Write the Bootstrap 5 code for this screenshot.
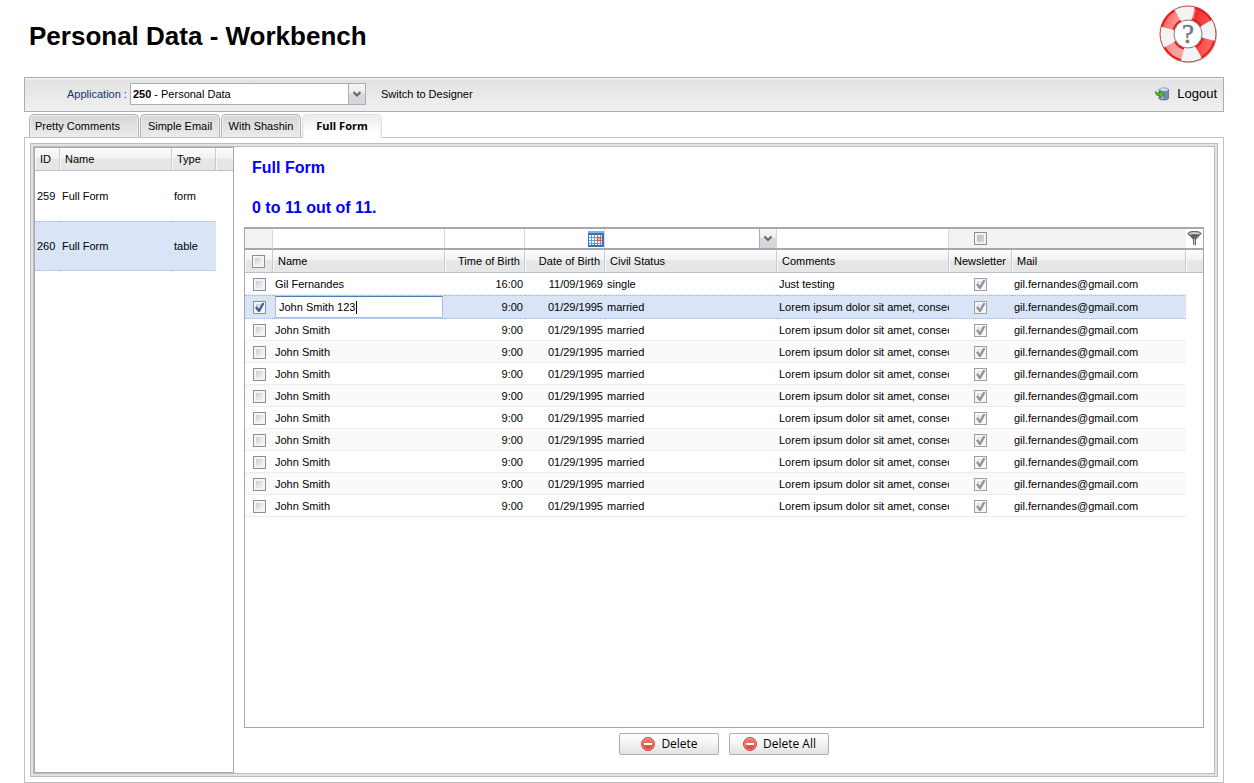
<!DOCTYPE html>
<html lang="en">
<head>
<meta charset="utf-8">
<meta name="viewport" content="width=device-width, initial-scale=1">
<title>Personal Data - Workbench</title>
<link href="https://cdn.jsdelivr.net/npm/bootstrap@5.3.0/dist/css/bootstrap.min.css" rel="stylesheet">
<style>
  body { font: 11px/14px "Liberation Sans", Arial, sans-serif; color: #000; background: #fff; padding: 0 30px 0 24px; }
  a, a:hover { color: #000; text-decoration: none; }
  .page-head { height: 77px; padding: 4px 6px 0 5px; }
  .page-head h1 { font-size: 26px; line-height: 32px; font-weight: 700; padding-top: 16px; margin: 0; }

  .toolbar { height: 35px; border: 1px solid #a9adb8; background: linear-gradient(#f2f2f2 0 1px, #e2e2e2 2px, #f0f0f0); padding: 0 6px 2px 42px; }
  .toolbar label { color: #15356b; }
  .app-picker { width: 236px; height: 22px; border: 1px solid #a9adb8; background: #fff; margin: 0 15px 0 3px; padding-left: 2px; }
  .drop { appearance: none; border: 0; border-radius: 0; background: #fff url("data:image/svg+xml,%3Csvg xmlns='http://www.w3.org/2000/svg' width='17' height='20'%3E%3ClinearGradient id='g' x2='0' y2='1'%3E%3Cstop stop-color='%23f6f6f6'/%3E%3Cstop offset='.45' stop-color='%23ececec'/%3E%3Cstop offset='.5' stop-color='%23d8d8d8'/%3E%3Cstop offset='1' stop-color='%23d4d4d4'/%3E%3C/linearGradient%3E%3Cpath fill='url(%23g)' d='M0 0h17v20H0z'/%3E%3Cpath stroke='%23a9adb8' d='M.5 0v20'/%3E%3Cpath fill='none' stroke='%23666' stroke-width='2' d='m5.500 8 3.500 3.500 3.500-3.500'/%3E%3C/svg%3E") no-repeat right center; padding: 0 20px 0 3px; font: inherit; color: #000; outline: 0; }
  .logout { font-size: 13px; }

  .nav-tabs { border: 0; margin: 2px 0 -1px 5px; gap: 1px; position: relative; }
  .nav-tabs .nav-link { width: 80px; height: 23px; margin: 0; padding: 0 0 1px; border: 1px solid #b0b0b0; border-bottom: 0; border-radius: 5px 5px 0 0; background: linear-gradient(#d6d6d6, #ececec); box-shadow: inset 1px 1px #f0f0f0, inset -1px 0 #f0f0f0; color: #000; font: inherit; }
  .nav-tabs .nav-link.first-tab { width: 110px; padding-left: 5px; text-align: left; }
  .nav-tabs .nav-link.active { height: 24px; background: linear-gradient(#ebebeb, #fff 80%); font: 700 11px/14px "Open Sans", sans-serif; color: #000; }

  .tab-panel { border: 1px solid #c2c2c6; padding: 5px; }
  .frame { border: 1px solid #bdbdbd; background: #e2e3e1; padding: 2px; }
  .frame-body { border: 1px solid #bdbdbd; background: #fff; }
  .sidebar { width: 200px; border: 1px solid #a5a8b3; flex: none; }
  .workspace { padding: 11px 10px 18px; min-width: 0; }
  .workspace h2 { font-size: 16px; line-height: 20px; font-weight: 700; color: #00f; margin: 0 8px 20px; }
  .workspace h2 + h2 { margin-bottom: 9px; }
  .grid-box { border: 1px solid #a5a8b3; }

  .data-grid { width: 100%; table-layout: fixed; border-collapse: separate; border-spacing: 0; }
  .data-grid th, .data-grid td { padding: 0 0 0 2px; white-space: nowrap; overflow: hidden; vertical-align: middle; }
  .data-grid .heads th { height: 23px; padding: 0 4px 0 5px; font-weight: 400; background: linear-gradient(#fcfcfc, #f2f2f2 45%, #e6e6e6 50%, #e6e6e6); border-right: 1px solid #c5cbd5; border-bottom: 1px solid #b8bfcd; box-shadow: inset 1px 0 #fafafa; }
  .data-grid .heads th:last-child { border-right: 0; }
  .data-grid tbody td { height: 22px; border-bottom: 1px solid #ededed; }
  .data-grid tbody tr:nth-child(even) td { background: #fafafa; }
  .data-grid tbody td:last-child, .data-grid tbody tr:nth-child(even) td:last-child { border: 0; background: none; }
  .data-grid .text-end { padding-right: 2px; }
  .data-grid tbody tr.picked td:not(:last-child) { height: 24px; background: #d9e4f6; border-top: 1px dotted #9db6e4; border-bottom: 1px dotted #9db6e4; }
  .data-grid .center-cell { text-align: center; }
  .data-grid.tall tbody td, .data-grid.tall tbody tr.picked td:not(:last-child) { height: 50px; }
  .data-grid.tall tbody tr:first-child td { border: 0; }

  .filters td { height: 22px; background: #f3f3f3; border-top: 1px solid #a5a8b3; border-bottom: 2px solid #a5a8b3; }
  .data-grid .filters td { padding: 0; }
  .data-grid .filters td:first-child { border-right: 1px solid #d8dae0; }
  .data-grid .filters td:last-child { background: #fff; }
  .filters .fill { display: block; width: 100%; height: 19px; border: 1px solid #d8dae0; border-width: 0 1px 0 0; border-radius: 0; background-color: #fff; outline: 0; }
  .filters .date-cell { height: 19px; background: #fff; border-right: 1px solid #d8dae0; }
  .filters .date-cell .fill { border-right: 0; min-width: 0; }
  .plain { border: 0; background: none; padding: 0; display: block; line-height: 0; }

  .tick { appearance: none; display: block; margin: 0 auto; width: 13px; height: 13px; border: 1px solid #8e8f8f; background: linear-gradient(135deg, #cbcfd5, #f6f6f6) content-box, #f4f4f4; padding: 2px; box-shadow: inset 0 0 0 1px #f4f4f4; }
  .data-grid tbody .tick { margin-top: 1px; }
  .data-grid tbody td:has(.tick) { padding: 0; }
  .tick:checked { background: url("data:image/svg+xml,%3Csvg xmlns='http://www.w3.org/2000/svg' viewBox='0 0 11 11'%3E%3Cpath fill='none' stroke='%23405a96' stroke-width='2' d='m2.500 5 2.500 3.500L9 1.500'/%3E%3C/svg%3E") border-box, linear-gradient(135deg, #cbcfd5, #f6f6f6) content-box, #f4f4f4; }
  .tick:disabled { border-color: #a0a0a0; background: linear-gradient(135deg, #e0e2e5, #f6f6f6) content-box, #f8f8f8; }
  .tick:disabled:checked { background: url("data:image/svg+xml,%3Csvg xmlns='http://www.w3.org/2000/svg' viewBox='0 0 11 11'%3E%3Cpath fill='none' stroke='%238e939c' stroke-width='2' d='m2.500 5 2.500 3.500L9 1.500'/%3E%3C/svg%3E") border-box, linear-gradient(135deg, #e0e2e5, #f6f6f6) content-box, #f8f8f8; }
  .tick.mixed { background: linear-gradient(135deg, #bfbfbf, #d6d6d6) content-box, #f4f4f4; }
  .cell-edit { display: block; width: 168px; height: 22px; border: 1px solid #a9c0e2; border-top-color: #4f7bb5; border-radius: 0; padding: 0 3px; font: inherit; color: #000; outline: 0; background: linear-gradient(#000, #000) 80px 4px / 1px 13px no-repeat #fff; }

  .actions { gap: 10px; margin-top: 5px; }
  .actions .btn { width: 100px; height: 22px; padding: 0 0 0 1px; gap: 6px; border: 1px solid #a9adb8; border-radius: 2px; background: linear-gradient(#fff, #f3f3f3 50%, #e2e2e2); font: 12px/16px "Open Sans", sans-serif; color: #000; }
</style>
<script src="https://cdn.jsdelivr.net/npm/bootstrap@5.3.0/dist/js/bootstrap.bundle.min.js" defer></script>
</head>
<body class="min-vh-100 d-flex flex-column">
<svg width="0" height="0" class="position-absolute" aria-hidden="true">
  <defs>
    <linearGradient id="redDisc" x2="0" y2="1"><stop stop-color="#f28478"/><stop offset="1" stop-color="#d83a30"/></linearGradient>
    <symbol id="minus" viewBox="0 0 14 14"><circle cx="7" cy="7" r="6.500" fill="url(#redDisc)" stroke="#c9453c"/><circle cx="7" cy="7" r="5.500" fill="none" stroke="#f4a69e" stroke-width=".7"/><path fill="#fff" d="M3 6h8v2H3z"/></symbol>
  </defs>
</svg>

<header class="page-head d-flex justify-content-between align-items-start">
  <h1>Personal Data - Workbench</h1>
  <a href="#" aria-label="Help">
    <svg width="60" height="60" viewBox="0 0 60 60" class="d-block">
      <defs>
        <linearGradient id="ring" gradientUnits="userSpaceOnUse" x1="0" y1="4" x2="0" y2="56"><stop stop-color="#f66"/><stop offset=".3" stop-color="#fba09e"/><stop offset=".5" stop-color="#fba4a2"/><stop offset=".55" stop-color="#f02c2c"/><stop offset="1" stop-color="#fb6b68"/></linearGradient>
      </defs>
      <circle cx="31" cy="31" r="28" fill="#999" opacity=".6"/>
      <circle cx="30" cy="30" r="28" fill="#f3f3f3"/>
      <g fill="none">
        <circle cx="30" cy="30" r="21" stroke="url(#ring)" stroke-width="14" stroke-dasharray="16.493 16.493" transform="rotate(-76 30 30)"/>
        <circle cx="30" cy="30" r="27" stroke="#f01818" stroke-width="2" stroke-dasharray="21.206 21.206" transform="rotate(-76 30 30)"/>
        <circle cx="30" cy="30" r="28" stroke="#c24444" stroke-width="1"/>
        <circle cx="30" cy="30" r="15" stroke="#e01818" stroke-width="2" stroke-dasharray="11.781 11.781" transform="rotate(-76 30 30)"/>
      </g>
      <circle cx="30" cy="30" r="14" fill="#fff" stroke="#8d7777" stroke-width="1"/>
      <text x="30" y="39" text-anchor="middle" font-family="Liberation Serif, serif" font-size="27" fill="#777" stroke="#777" stroke-width=".5">?</text>
    </svg>
  </a>
</header>

<nav class="toolbar d-flex align-items-center">
  <label for="app">Application :</label>
  <div class="app-picker d-flex align-items-center">
    <b>250</b>
    <select id="app" class="drop flex-grow-1 h-100"><option>- Personal Data</option></select>
  </div>
  <a href="#">Switch to Designer</a>
  <a href="#" class="logout ms-auto d-flex align-items-center gap-2">
    <svg width="14" height="14" viewBox="0 0 14 14"><path fill="#7c86ba" stroke="#565f95" stroke-width=".7" d="M4 2.500C4.500.5 13 .5 13.500 2.500v9c-.5 2-9 2-9.500 0z"/><ellipse cx="8.700" cy="2.600" rx="4.500" ry="1.500" fill="#d3d8ee"/><path fill="#b6bde0" d="M6 5h2v7H6z"/><path fill="#55c12c" stroke="#237a12" stroke-width=".7" d="M.5 4.500 2.500 6H5V3.500L9.500 7.500 5 11V8.500H2.500C1 8 .5 6.500.5 4.500z"/></svg>
    Logout
  </a>
</nav>

<ul class="nav nav-tabs">
  <li class="nav-item"><button type="button" class="nav-link first-tab">Pretty Comments</button></li>
  <li class="nav-item"><button type="button" class="nav-link">Simple Email</button></li>
  <li class="nav-item"><button type="button" class="nav-link">With Shashin</button></li>
  <li class="nav-item"><button type="button" class="nav-link active">Full Form</button></li>
</ul>

<main class="tab-panel flex-grow-1 d-flex">
  <div class="frame flex-grow-1 d-flex">
    <div class="frame-body flex-grow-1 d-flex">
      <aside class="sidebar">
        <table class="data-grid tall">
          <colgroup><col style="width:25px"><col><col style="width:44px"><col style="width:17px"></colgroup>
          <thead><tr class="heads"><th>ID</th><th>Name</th><th>Type</th><th></th></tr></thead>
          <tbody>
            <tr><td>259</td><td>Full Form</td><td>form</td><td></td></tr>
            <tr class="picked"><td>260</td><td>Full Form</td><td>table</td><td></td></tr>
          </tbody>
        </table>
      </aside>

      <section class="workspace flex-grow-1 d-flex flex-column">
        <h2>Full Form</h2>
        <h2>0 to 11 out of 11.</h2>
        <div class="grid-box flex-grow-1">
          <table class="data-grid">
            <colgroup><col style="width:28px"><col style="width:172px"><col style="width:80px"><col style="width:80px"><col style="width:172px"><col style="width:172px"><col style="width:63px"><col><col style="width:17px"></colgroup>
            <thead>
              <tr class="filters">
                <td></td>
                <td><input class="fill" aria-label="Filter name"></td>
                <td><input class="fill" aria-label="Filter time of birth"></td>
                <td><div class="date-cell d-flex align-items-center"><input class="fill flex-grow-1" aria-label="Filter date of birth"><button type="button" class="plain" aria-label="Pick a date"><svg width="16" height="16" viewBox="0 0 16 16"><path fill="#3474b8" d="M0 0h16v16H0z"/><path fill="#7fb0e0" d="M0 0h16v2H0z"/><path fill="#fff" d="M1 4h13v10H1z"/><path stroke="#6a9bd0" d="M1 6.500h13M1 9.500h13M1 12.500h13M3.500 4v10M6.500 4v10M9.500 4v10M12.500 4v10"/><path fill="#fff" stroke="#e8562e" stroke-width="1.500" d="M9.500 6.500h3v3h-3z"/></svg></button></div></td>
                <td><select class="drop fill" aria-label="Filter civil status"><option></option></select></td>
                <td><input class="fill" aria-label="Filter comments"></td>
                <td><input type="checkbox" class="tick mixed" aria-label="Filter newsletter"></td>
                <td></td>
                <td><button type="button" class="plain mx-auto" aria-label="Apply filter"><svg width="15" height="15" viewBox="0 0 15 15"><path fill="#666" d="M.5 2.500 6 8.500v5l3 1v-6l5.500-6z"/><path fill="#ccc" d="M7 8h1v6l-1-.5z"/><ellipse cx="7.500" cy="2.500" rx="6.500" ry="2" fill="#c8c8c8" stroke="#555"/><path fill="#444" d="M4 3.500h7L9 4.500H6z"/></svg></button></td>
              </tr>
              <tr class="heads">
                <th class="center-cell px-0"><input type="checkbox" class="tick" aria-label="Select all"></th><th>Name</th><th class="text-end pe-1">Time of Birth</th><th class="text-end pe-1">Date of Birth</th><th>Civil Status</th><th>Comments</th><th class="pe-0">Newsletter</th><th>Mail</th><th></th>
              </tr>
            </thead>
            <tbody>
              <tr><td><input type="checkbox" class="tick" aria-label="Select row"></td><td>Gil Fernandes</td><td class="text-end">16:00</td><td class="text-end">11/09/1969</td><td>single</td><td>Just testing</td><td><input type="checkbox" class="tick" checked disabled aria-label="Newsletter"></td><td>gil.fernandes@gmail.com</td><td></td></tr>
              <tr class="picked"><td><input type="checkbox" class="tick" checked aria-label="Select row"></td><td><input class="cell-edit" value="John Smith 123" aria-label="Name"></td><td class="text-end">9:00</td><td class="text-end">01/29/1995</td><td>married</td><td>Lorem ipsum dolor sit amet, consec</td><td><input type="checkbox" class="tick" checked disabled aria-label="Newsletter"></td><td>gil.fernandes@gmail.com</td><td></td></tr>
              <tr><td><input type="checkbox" class="tick" aria-label="Select row"></td><td>John Smith</td><td class="text-end">9:00</td><td class="text-end">01/29/1995</td><td>married</td><td>Lorem ipsum dolor sit amet, consec</td><td><input type="checkbox" class="tick" checked disabled aria-label="Newsletter"></td><td>gil.fernandes@gmail.com</td><td></td></tr>
              <tr><td><input type="checkbox" class="tick" aria-label="Select row"></td><td>John Smith</td><td class="text-end">9:00</td><td class="text-end">01/29/1995</td><td>married</td><td>Lorem ipsum dolor sit amet, consec</td><td><input type="checkbox" class="tick" checked disabled aria-label="Newsletter"></td><td>gil.fernandes@gmail.com</td><td></td></tr>
              <tr><td><input type="checkbox" class="tick" aria-label="Select row"></td><td>John Smith</td><td class="text-end">9:00</td><td class="text-end">01/29/1995</td><td>married</td><td>Lorem ipsum dolor sit amet, consec</td><td><input type="checkbox" class="tick" checked disabled aria-label="Newsletter"></td><td>gil.fernandes@gmail.com</td><td></td></tr>
              <tr><td><input type="checkbox" class="tick" aria-label="Select row"></td><td>John Smith</td><td class="text-end">9:00</td><td class="text-end">01/29/1995</td><td>married</td><td>Lorem ipsum dolor sit amet, consec</td><td><input type="checkbox" class="tick" checked disabled aria-label="Newsletter"></td><td>gil.fernandes@gmail.com</td><td></td></tr>
              <tr><td><input type="checkbox" class="tick" aria-label="Select row"></td><td>John Smith</td><td class="text-end">9:00</td><td class="text-end">01/29/1995</td><td>married</td><td>Lorem ipsum dolor sit amet, consec</td><td><input type="checkbox" class="tick" checked disabled aria-label="Newsletter"></td><td>gil.fernandes@gmail.com</td><td></td></tr>
              <tr><td><input type="checkbox" class="tick" aria-label="Select row"></td><td>John Smith</td><td class="text-end">9:00</td><td class="text-end">01/29/1995</td><td>married</td><td>Lorem ipsum dolor sit amet, consec</td><td><input type="checkbox" class="tick" checked disabled aria-label="Newsletter"></td><td>gil.fernandes@gmail.com</td><td></td></tr>
              <tr><td><input type="checkbox" class="tick" aria-label="Select row"></td><td>John Smith</td><td class="text-end">9:00</td><td class="text-end">01/29/1995</td><td>married</td><td>Lorem ipsum dolor sit amet, consec</td><td><input type="checkbox" class="tick" checked disabled aria-label="Newsletter"></td><td>gil.fernandes@gmail.com</td><td></td></tr>
              <tr><td><input type="checkbox" class="tick" aria-label="Select row"></td><td>John Smith</td><td class="text-end">9:00</td><td class="text-end">01/29/1995</td><td>married</td><td>Lorem ipsum dolor sit amet, consec</td><td><input type="checkbox" class="tick" checked disabled aria-label="Newsletter"></td><td>gil.fernandes@gmail.com</td><td></td></tr>
              <tr><td><input type="checkbox" class="tick" aria-label="Select row"></td><td>John Smith</td><td class="text-end">9:00</td><td class="text-end">01/29/1995</td><td>married</td><td>Lorem ipsum dolor sit amet, consec</td><td><input type="checkbox" class="tick" checked disabled aria-label="Newsletter"></td><td>gil.fernandes@gmail.com</td><td></td></tr>
            </tbody>
          </table>
        </div>
        <div class="actions d-flex justify-content-center">
          <button type="button" class="btn d-flex align-items-center justify-content-center"><svg width="14" height="14"><use href="#minus"/></svg>Delete</button>
          <button type="button" class="btn d-flex align-items-center justify-content-center"><svg width="14" height="14"><use href="#minus"/></svg>Delete All</button>
        </div>
      </section>
    </div>
  </div>
</main>
</body>
</html>
